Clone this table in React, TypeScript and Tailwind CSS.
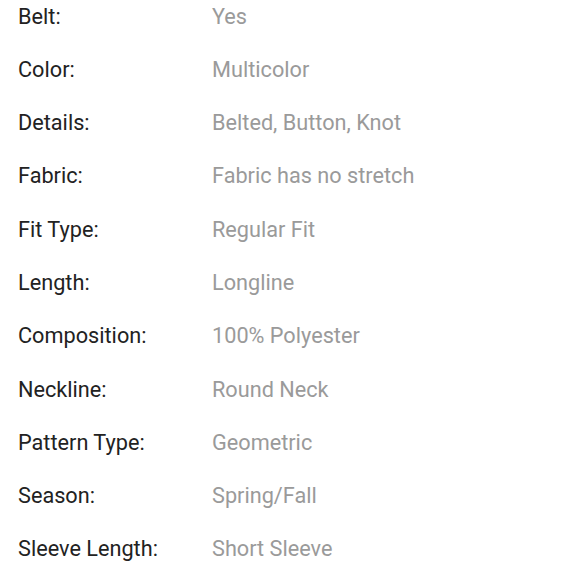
const specs = [
  { label: 'Belt:', value: 'Yes' },
  { label: 'Color:', value: 'Multicolor' },
  { label: 'Details:', value: 'Belted, Button, Knot' },
  { label: 'Fabric:', value: 'Fabric has no stretch' },
  { label: 'Fit Type:', value: 'Regular Fit' },
  { label: 'Length:', value: 'Longline' },
  { label: 'Composition:', value: '100% Polyester' },
  { label: 'Neckline:', value: 'Round Neck' },
  { label: 'Pattern Type:', value: 'Geometric' },
  { label: 'Season:', value: 'Spring/Fall' },
  { label: 'Sleeve Length:', value: 'Short Sleeve' },
]

export default function App() {
  return (
    <div className="w-[579px] h-[580px] overflow-hidden bg-white font-['Roboto',sans-serif] text-[21.7px]">
      <div className="flex flex-col gap-[23.3px] pl-[18px] pt-[1.5px]">
        {specs.map(s => (
          <div key={s.label} className="flex leading-[30px]">
            <span className="w-[194px] shrink-0 text-[#222222]">{s.label}</span>
            <span className="text-[#9a9a9a]">{s.value}</span>
          </div>
        ))}
      </div>
    </div>
  )
}
